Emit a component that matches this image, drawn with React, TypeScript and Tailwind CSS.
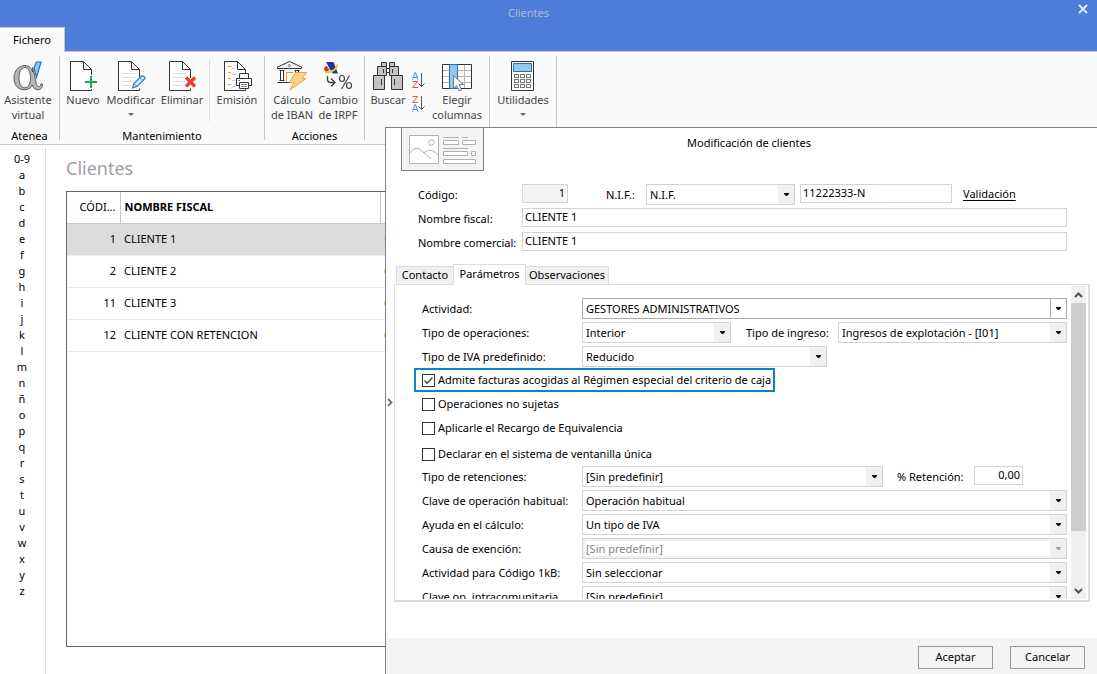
import type { ReactNode } from "react";

const letters = ["0-9", ..."abcdefghijklmn".split(""), "ñ", ..."opqrstuvwxyz".split("")];

const clients = [
  { code: 1, name: "CLIENTE 1" },
  { code: 2, name: "CLIENTE 2" },
  { code: 11, name: "CLIENTE 3" },
  { code: 12, name: "CLIENTE CON RETENCION" },
];

function Sheet({ lines = false }: { lines?: boolean }) {
  return (
    <>
      <path d="M2.500 1.500H16L23.500 9V30.500H2.500Z" fill="#fff" />
      {lines && <path d="M6 13.500H19M6 17.500H19M6 21.500H18M6 25.500H15" stroke="#dcdcdc" fill="none" />}
      <path d="M23.500 18V9.500L15.500 1.500H2.500V30.500H23.500V28.500" stroke="#333" fill="none" />
      <path d="M15.500 1.500V9.500H23.500" stroke="#333" fill="none" />
    </>
  );
}

function AlphaIcon() {
  return (
    <svg width="32" height="32" viewBox="0 0 32 32" aria-hidden="true">
      <path
        d="M20.500 7.500L23 17C24 24 25 27 27.500 26.500C28.500 26.200 28.700 25 28.700 24H30.500C30.500 28 28.500 30 25.500 29.800C22.500 29.500 21 27.500 20.300 25C18.500 28.300 16 29.800 12.500 29.800C6 29.800 2 25 2 18C2 11 6.500 5.500 13 5.500C17 5.500 19.500 8 20.500 12Z"
        fill="#b5b5b5"
        stroke="#5c5c5c"
      />
      <path
        d="M12.800 7.500C8.500 7.500 7 12.500 7 18C7 23.500 9 27.800 12.800 27.800C16.500 27.800 18.500 23 18.500 18.500C18.500 12 16.500 7.500 12.800 7.500Z"
        fill="#fafafa"
        stroke="#5c5c5c"
      />
      <path d="M24.500 2H29L24.500 17.500L22 7.500Z" fill="#8ec8f0" stroke="#2173b4" strokeWidth="1.200" />
    </svg>
  );
}

function NewIcon() {
  return (
    <svg width="30" height="32" viewBox="0 0 30 32" aria-hidden="true">
      <Sheet />
      <path d="M23 15V29M16 22H30" stroke="#fafafa" strokeWidth="4" />
      <path d="M23 16V28M17 22H29" stroke="#21a559" strokeWidth="2" />
    </svg>
  );
}

function EditIcon() {
  return (
    <svg width="30" height="32" viewBox="0 0 30 32" aria-hidden="true">
      <Sheet lines />
      <path d="M16.500 28L18 23.500L25.500 16C26.500 15 29.800 17.500 28.500 19L21 26.500Z" fill="#d7ebf9" stroke="#3b8dca" strokeWidth="1.400" />
      <path d="M18 23.500L21 26.500M24 17.500L27 20.500" stroke="#3b8dca" />
    </svg>
  );
}

function DeleteIcon() {
  return (
    <svg width="30" height="32" viewBox="0 0 30 32" aria-hidden="true">
      <Sheet lines />
      <path d="M19 17.500L28 26.500M28 17.500L19 26.500" stroke="#ee3a36" strokeWidth="3.200" />
    </svg>
  );
}

function EmissionIcon() {
  return (
    <svg width="30" height="32" viewBox="0 0 30 32" aria-hidden="true">
      <Sheet />
      <path d="M6 6.500H9M6 12.500H9M6 18.500H9M6 24.500H9" stroke="#f39a1f" />
      <path d="M10 8.500H13M10 14.500H14M10 20.500H13M10 26.500H13" stroke="#ccc" />
      <path d="M14 14H30V28H14Z" fill="#fafafa" />
      <path d="M17.500 18V13.500H26.500V18M17.500 25.500H14.500V18.500H29.500V25.500H26.500M17.500 22.500H26.500V28.500H17.500Z" fill="#fff" stroke="#333" />
      <path d="M19 24.500H25M19 26.500H25" stroke="#888" />
      <path d="M16 20.500H18" stroke="#2f9be0" />
    </svg>
  );
}

function BankIcon() {
  return (
    <svg width="32" height="32" viewBox="0 0 32 32" aria-hidden="true">
      <path d="M1.500 8.500V7L13.500 1.500L25.500 7V8.500Z" fill="#f3f3f3" stroke="#333" strokeLinejoin="round" />
      <circle cx="13.500" cy="5.500" r="1" fill="#fff" stroke="#666" />
      <path d="M3.500 10.500H8.500M18.500 10.500H23.500M3.500 20.500H8.500M1.500 22.500H18" stroke="#333" />
      <path d="M4.500 10.500V20.500M7.500 10.500V20.500M19.500 10.500V13M22.500 10.500V13" stroke="#333" />
      <path d="M10.500 21.500V12.500H17.500" fill="none" stroke="#e9913d" />
      <path d="M19.500 12.500H30.500L26 18.500H30L14 30L18 22.500H13.500Z" fill="#fbd48b" stroke="#e9a24b" />
    </svg>
  );
}

function TaxIcon() {
  return (
    <svg width="32" height="32" viewBox="0 0 32 32" aria-hidden="true">
      <path d="M4 2H11.500L16 13.500H11L8 9.500Z" fill="#173b94" />
      <path d="M2 8L4.500 5.500L7.500 10L4.500 12C2.500 11 2 9.500 2 8Z" fill="#dd3030" />
      <path d="M3 12C8 13.500 14.500 10 15 4.500" fill="none" stroke="#f8c51c" strokeWidth="1.800" />
      <path d="M5.500 16V19.500C5.500 21.500 6.500 22.500 8.500 22.500H12.500M9 18.500L13 22.500L9 26.500" fill="none" stroke="#444" strokeWidth="1.400" />
      <path d="M27.500 15.500L19.500 29" stroke="#444" strokeWidth="1.200" />
      <ellipse cx="20" cy="18.500" rx="2.500" ry="3" fill="none" stroke="#444" strokeWidth="1.200" />
      <ellipse cx="27" cy="25.500" rx="2.500" ry="3" fill="none" stroke="#444" strokeWidth="1.200" />
    </svg>
  );
}

function BinocularsIcon() {
  return (
    <svg width="32" height="32" viewBox="0 0 32 32" aria-hidden="true">
      <g fill="#c4c4c4" stroke="#333">
        <path d="M9.500 2.500H14.500V6.500H9.500ZM17.500 2.500H22.500V6.500H17.500Z" />
        <path d="M14.500 8.500H17.500V12.500H14.500Z" fill="#fff" />
        <path d="M5.500 6.500H14.500V15.500H5.500ZM17.500 6.500H26.500V15.500H17.500Z" />
        <path d="M1.500 15.500H12.500V29.500H1.500ZM19.500 15.500H30.500V29.500H19.500Z" />
      </g>
      <path d="M9.500 19V25M22.500 19V25M11.500 9V13M20.500 9V13" stroke="#333" />
    </svg>
  );
}

function SortIcon({ descending = false }: { descending?: boolean }) {
  const a = descending ? "M1.500 16.500L4 9.500H4.500L7 16.500M2.500 14.500H6" : "M1.500 7.500L4 0.500H4.500L7 7.500M2.500 5.500H6";
  const z = descending ? "M1.500 1.500H6.500L1.500 7.500H7" : "M1.500 9.500H6.500L1.500 15.500H7";
  return (
    <svg width="16" height="18" viewBox="0 0 16 18" fill="none" aria-hidden="true">
      <path d={a} stroke="#4596cf" />
      <path d={z} stroke="#ee5250" />
      <path d="M10.500 1V14.500M7.500 11.500L10.500 14.500L13.500 11.500" stroke="#555" />
    </svg>
  );
}

function ColumnsIcon() {
  return (
    <svg width="32" height="32" viewBox="0 0 32 32" aria-hidden="true">
      <path d="M1.500 4.500H30.500V28.500H1.500Z" fill="#fff" />
      <path d="M2 10.500H30M2 16.500H30M2 22.500H30" stroke="#b5b5b5" />
      <path d="M16.500 4.500V28.500M23.500 4.500V28.500" stroke="#b5b5b5" />
      <path d="M1.500 4.500H30.500V28.500H1.500Z" fill="none" stroke="#333" />
      <path d="M8.500 4.500H16.500V28.500H8.500Z" fill="#92c9f1" stroke="#2173b4" />
      <path d="M12.500 15.500V28.500L15.500 25.500L18.500 31L20.500 30L18 24.500H22.500Z" fill="#f8f8f8" stroke="#777" />
    </svg>
  );
}

function CalculatorIcon() {
  return (
    <svg width="32" height="32" viewBox="0 0 32 32" aria-hidden="true">
      <path d="M4.500 1.500H26.500V30.500H4.500Z" fill="#fff" stroke="#333" />
      <path d="M6.500 3.500H24.500V11.500H6.500Z" fill="#92c9f1" stroke="#2173b4" />
      {[14.5, 19.5, 24.5].map((y) =>
        [7.5, 13.5, 19.5].map((x) => <rect key={`${x}-${y}`} x={x} y={y} width="4" height="3" fill="#fff" stroke="#777" />),
      )}
    </svg>
  );
}

function Tool({ icon, lines, menu, className }: { icon: ReactNode; lines: string[]; menu?: boolean; className: string }) {
  return (
    <button type="button" className={`flex shrink-0 flex-col items-center text-[11px] leading-[15px] text-[#444] ${className}`}>
      {icon}
      {lines.map((line) => (
        <span key={line} className="whitespace-nowrap">
          {line}
        </span>
      ))}
      {menu && (
        <svg width="6" height="3" viewBox="0 0 6 3" className="mt-1.5" aria-hidden="true">
          <path d="M0 0H6L3 3Z" fill="#666" />
        </svg>
      )}
    </button>
  );
}

function Group({ title, children, className }: { title: string; children: ReactNode; className: string }) {
  return (
    <section className={`flex shrink-0 flex-col border-r border-[#c8c8c8] ${className}`}>
      <div className="flex flex-1 items-start pt-1">{children}</div>
      <h2 className="h-3 text-center text-[11px] leading-[15px]">{title}</h2>
    </section>
  );
}

function Combo({ id, value, className = "", strong, disabled }: { id: string; value: string; className?: string; strong?: boolean; disabled?: boolean }) {
  return (
    <div className={`relative h-[21px] ${className}`}>
      <select
        id={id}
        disabled={disabled}
        className={`block h-full w-full appearance-none border pr-5 pl-[3px] text-[11px] leading-[19px] ${
          strong ? "border-[#ababab]" : "border-[#d3d3d3]"
        } ${disabled ? "bg-white text-[#838383] opacity-100 ring-2 ring-[#f0f0f0] ring-inset" : "bg-white text-black"}`}
      >
        <option>{value}</option>
      </select>
      <span
        className={`pointer-events-none absolute inset-y-px right-px flex w-4 items-center justify-center ${
          strong ? "border-l border-[#ababab] bg-white" : "bg-[#f0f0f0]"
        }`}
      >
        <svg width="5" height="3" viewBox="0 0 5 3" aria-hidden="true">
          <path d="M0 0H5V1L3 3H2L0 1Z" fill={disabled ? "#a0a0a0" : "#000"} />
        </svg>
      </span>
    </div>
  );
}

const inputClass = "h-[19px] border border-[#d3d3d3] px-0.5 pb-0.5 text-[11px] leading-[15px]";

function Row({ id, label, children }: { id: string; label: string; children: ReactNode }) {
  return (
    <div className="flex h-6 items-start">
      <label htmlFor={id} className="w-40 shrink-0 leading-[22px] whitespace-nowrap">
        {label}
      </label>
      {children}
    </div>
  );
}

function Check({ label, checked }: { label: string; checked?: boolean }) {
  return (
    <label className="flex items-center gap-[3px] leading-4 whitespace-nowrap">
      <span className="relative flex">
        <input type="checkbox" defaultChecked={checked} className="peer size-[13px] appearance-none border border-[#333] bg-white" />
        <svg width="13" height="13" viewBox="0 0 13 13" className="pointer-events-none absolute inset-0 hidden peer-checked:block" aria-hidden="true">
          <path d="M2.500 6.500L5 9.500L10.500 3.500" fill="none" stroke="#444" strokeWidth="1.400" />
        </svg>
      </span>
      {label}
    </label>
  );
}

function Ribbon() {
  return (
    <header>
      <div className="relative bg-[#4d7cdb]">
        <div className="flex h-[27px] items-center justify-center pr-10 text-[11px] text-[#b0bccd]">
          <h1>Clientes</h1>
          <button type="button" aria-label="Cerrar" className="absolute top-1 right-[9px]">
            <svg width="10" height="10" viewBox="0 0 10 10" aria-hidden="true">
              <path d="M1 1L9 9M9 1L1 9" stroke="#e8edf8" strokeWidth="1.800" />
            </svg>
          </button>
        </div>
        <div className="flex h-[25px] items-stretch">
          <button type="button" className="w-[65px] border-t border-r border-[#c8c8c8] bg-[#fafafa] text-[11px]">
            Fichero
          </button>
          <div className="flex-1 border-b border-[#c8c8c8]" />
        </div>
      </div>
      <nav className="flex h-[93px] border-b border-[#c8c8c8] bg-[#fafafa] pt-1 pb-1">
        <Group title="Atenea" className="w-[60px]">
          <Tool icon={<AlphaIcon />} lines={["Asistente", "virtual"]} className="w-14" />
        </Group>
        <Group title="Mantenimiento" className="w-[205px]">
          <Tool icon={<NewIcon />} lines={["Nuevo"]} className="w-[46px]" />
          <Tool icon={<EditIcon />} lines={["Modificar"]} menu className="w-[50px]" />
          <Tool icon={<DeleteIcon />} lines={["Eliminar"]} className="w-[52px]" />
          <span className="ml-px h-[61px] w-px bg-[#dcdcdc]" />
          <Tool icon={<EmissionIcon />} lines={["Emisión"]} className="w-[54px]" />
        </Group>
        <Group title="Acciones" className="w-[100px]">
          <Tool icon={<BankIcon />} lines={["Cálculo", "de IBAN"]} className="ml-1 w-[46px]" />
          <Tool icon={<TaxIcon />} lines={["Cambio", "de IRPF"]} className="w-[46px]" />
        </Group>
        <Group title="" className="w-[125px]">
          <Tool icon={<BinocularsIcon />} lines={["Buscar"]} className="w-[46px]" />
          <div className="mt-3 flex w-4 flex-col gap-[5px]">
            <button type="button" aria-label="Orden ascendente">
              <SortIcon />
            </button>
            <button type="button" aria-label="Orden descendente">
              <SortIcon descending />
            </button>
          </div>
          <Tool icon={<ColumnsIcon />} lines={["Elegir", "columnas"]} className="w-[60px]" />
        </Group>
        <Group title="" className="w-[67px]">
          <Tool icon={<CalculatorIcon />} lines={["Utilidades"]} menu className="w-[66px]" />
        </Group>
      </nav>
    </header>
  );
}

function ClientList() {
  return (
    <main className="flex min-h-0 flex-1 pt-0.5">
      <nav className="flex w-[46px] shrink-0 flex-col items-center border-r border-[#dcdcdc] pt-1 pr-px text-[11px]">
        {letters.map((letter) => (
          <button key={letter} type="button" className="block h-4 w-full leading-4">
            {letter}
          </button>
        ))}
      </nav>
      <section className="flex min-w-0 flex-1 flex-col pr-5 pb-[27px] pl-5">
        <h2 className="pt-2 pb-2.5 text-[18px] leading-[26px] text-[#a0a0a0]">Clientes</h2>
        <div className="flex-1 border border-[#666]">
          <table className="w-full table-fixed border-collapse text-[11px]">
            <thead>
              <tr className="h-[31px] border-b border-[#c8c8c8]">
                <th className="w-[53px] overflow-hidden border-r border-[#c8c8c8] pr-1 text-right font-normal whitespace-nowrap">CÓDI...</th>
                <th className="w-[260px] border-r border-[#c8c8c8] pl-1 text-left font-bold">NOMBRE FISCAL</th>
                <th className="pl-1">
                  <span className="block h-2 w-2.5 bg-[#f5ef7a]" />
                </th>
              </tr>
            </thead>
            <tbody>
              {clients.map((client) => (
                <tr key={client.code} className="h-8 border-b border-[#ececec] first:bg-[#dcdcdc]">
                  <td className="pr-1 text-right">{client.code}</td>
                  <td className="pl-1">{client.name}</td>
                  <td className="pl-1">
                    <span className="block h-1 w-2.5 bg-[#f3cf62]" />
                  </td>
                </tr>
              ))}
            </tbody>
          </table>
        </div>
      </section>
    </main>
  );
}

function CardPicture() {
  return (
    <svg width="67" height="29" viewBox="0 0 67 29" fill="none" stroke="#b0b0b0" aria-hidden="true">
      <path d="M0.500 0.500H29.500V28.500H0.500Z" fill="#fff" />
      <circle cx="22.500" cy="7.500" r="2.700" />
      <path d="M1 18C5 12 10 12 14 17L22 24M15 18C19 14 24 14 29 20" />
      <path d="M34 2.500H50M53 2.500H59M34 13.500H59" />
      <path d="M34.500 5.500H49.500V9.500H34.500ZM53.500 5.500H66.500V9.500H53.500ZM34.500 16.500H58.500V20.500H34.500ZM62.500 16.500H66.500V20.500H62.500ZM34.500 24.500H66.500V28.500H34.500Z" fill="#fff" />
    </svg>
  );
}

function Arrow({ down = false }: { down?: boolean }) {
  return (
    <svg width="9" height="6" viewBox="0 0 9 6" fill="none" aria-hidden="true">
      <path d={down ? "M1 1L4.500 4.500L8 1" : "M1 5L4.500 1.500L8 5"} stroke="#505050" strokeWidth="2" />
    </svg>
  );
}

function Parameters() {
  return (
    <div className="flex min-h-0 flex-1 border border-r-2 border-b-2 border-[#dcdcdc] pt-px pr-0.5 pb-px">
      <div className="min-w-0 flex-1 overflow-hidden pt-3 pr-1 pl-[27px]">
        <Row id="activity" label="Actividad:">
          <Combo id="activity" value="GESTORES ADMINISTRATIVOS" strong className="flex-1" />
        </Row>
        <Row id="operations" label="Tipo de operaciones:">
          <Combo id="operations" value="Interior" className="w-[149px]" />
          <label htmlFor="income" className="ml-[15px] w-[92px] leading-[22px] whitespace-nowrap">
            Tipo de ingreso:
          </label>
          <Combo id="income" value="Ingresos de explotación - [I01]" className="flex-1" />
        </Row>
        <Row id="vat" label="Tipo de IVA predefinido:">
          <Combo id="vat" value="Reducido" className="w-[245px]" />
        </Row>
        <div className="-mt-0.5 -ml-2 flex h-6 w-fit items-center border-2 border-[#0c83c6] pr-0.5 pl-1.5">
          <Check label="Admite facturas acogidas al Régimen especial del criterio de caja" checked />
        </div>
        <div className="mt-1 flex flex-col gap-2">
          <Check label="Operaciones no sujetas" />
          <Check label="Aplicarle el Recargo de Equivalencia" />
        </div>
        <div className="mt-2.5 mb-1">
          <Check label="Declarar en el sistema de ventanilla única" />
        </div>
        <Row id="retentions" label="Tipo de retenciones:">
          <Combo id="retentions" value="[Sin predefinir]" className="w-[301px]" />
          <label htmlFor="percent" className="ml-3.5 w-[77px] leading-[22px] whitespace-nowrap">
            % Retención:
          </label>
          <input id="percent" defaultValue="0,00" className={`${inputClass} w-[49px] text-right`} />
        </Row>
        <Row id="key" label="Clave de operación habitual:">
          <Combo id="key" value="Operación habitual" className="flex-1" />
        </Row>
        <Row id="help" label="Ayuda en el cálculo:">
          <Combo id="help" value="Un tipo de IVA" className="flex-1" />
        </Row>
        <Row id="exemption" label="Causa de exención:">
          <Combo id="exemption" value="[Sin predefinir]" disabled className="flex-1" />
        </Row>
        <Row id="code1kb" label="Actividad para Código 1kB:">
          <Combo id="code1kb" value="Sin seleccionar" className="flex-1" />
        </Row>
        <Row id="intra" label="Clave op. intracomunitaria">
          <Combo id="intra" value="[Sin predefinir]" className="flex-1" />
        </Row>
      </div>
      <div className="flex w-[15px] flex-col items-center bg-[#f0f0f0]">
        <span className="flex h-[17px] items-center">
          <Arrow />
        </span>
        <span className="h-[73%] w-full bg-[#cdcdcd]" />
        <span className="flex-1" />
        <span className="flex h-[17px] items-center">
          <Arrow down />
        </span>
      </div>
    </div>
  );
}

function ClientDialog() {
  return (
    <section role="dialog" aria-label="Modificación de clientes" className="absolute top-[127px] right-0 bottom-0 left-[385px] flex flex-col border-t border-l border-[#808080] bg-white text-[11px]">
      <div className="flex items-start pl-[15px]">
        <div className="flex h-[43px] w-[83px] items-center justify-center border border-t-0 border-[#808080] bg-[#f4f4f4]">
          <CardPicture />
        </div>
        <h2 className="flex-1 pt-1.5 text-center text-[11px] leading-[18px]">Modificación de clientes</h2>
        <span className="w-[83px]" />
      </div>

      <div className="mt-[13px] pr-[30px] pl-8">
        <div className="flex h-6 items-start">
          <label htmlFor="code" className="w-[104px] shrink-0 leading-[22px]">
            Código:
          </label>
          <input id="code" defaultValue="1" readOnly className="h-[19px] w-[46px] border border-[#d3d3d3] bg-[#f4f4f4] px-0.5 pb-0.5 text-right text-[11px] leading-[15px]" />
          <label htmlFor="nif-type" className="ml-[38px] w-10 leading-[22px]">
            N.I.F.:
          </label>
          <Combo id="nif-type" value="N.I.F." className="w-[149px]" />
          <input aria-label="Número de N.I.F." defaultValue="11222333-N" className={`${inputClass} ml-[5px] w-[152px]`} />
          <a href="#validacion" className="ml-[11px] leading-[20px] underline underline-offset-2">
            Validación
          </a>
        </div>
        <div className="flex h-6 items-start">
          <label htmlFor="fiscal" className="w-[104px] shrink-0 leading-[22px]">
            Nombre fiscal:
          </label>
          <input id="fiscal" defaultValue="CLIENTE 1" className={`${inputClass} min-w-0 flex-1`} />
        </div>
        <div className="flex h-6 items-start">
          <label htmlFor="trade" className="w-[104px] shrink-0 leading-[22px] whitespace-nowrap">
            Nombre comercial:
          </label>
          <input id="trade" defaultValue="CLIENTE 1" className={`${inputClass} min-w-0 flex-1`} />
        </div>
      </div>

      <div className="mt-2 flex min-h-0 flex-1">
        <button type="button" aria-label="Expandir" className="flex w-2 shrink-0 items-center justify-center pb-[98px]">
          <svg width="6" height="9" viewBox="0 0 6 9" fill="none" aria-hidden="true">
            <path d="M1 1L4.500 4.500L1 8" stroke="#707070" strokeWidth="1.800" />
          </svg>
        </button>
        <div className="mr-[7px] mb-9 flex min-w-0 flex-1 flex-col">
          <div role="tablist" className="-mb-px flex items-end pl-0.5">
            <button type="button" role="tab" className="h-[19px] w-[57px] border border-r-0 border-[#dcdcdc] bg-[#f0f0f0]">
              Contacto
            </button>
            <button type="button" role="tab" aria-selected="true" className="relative h-[21px] w-[73px] border border-b-0 border-[#dcdcdc] bg-white pb-0.5">
              Parámetros
            </button>
            <button type="button" role="tab" className="h-[19px] w-[83px] border border-l-0 border-[#dcdcdc] bg-[#f0f0f0]">
              Observaciones
            </button>
          </div>
          <Parameters />
        </div>
      </div>

      <footer className="flex h-9 shrink-0 items-center justify-end gap-[17px] bg-[#f4f4f4] pt-0.5 pr-3">
        <button type="button" className="h-[23px] w-[75px] border border-[#999]">
          Aceptar
        </button>
        <button type="button" className="h-[23px] w-[75px] border border-[#999]">
          Cancelar
        </button>
      </footer>
    </section>
  );
}

export default function App() {
  return (
    <div className="relative flex min-h-screen flex-col overflow-hidden bg-white font-['Noto_Sans','Open_Sans',sans-serif] text-black">
      <Ribbon />
      <ClientList />
      <ClientDialog />
    </div>
  );
}
